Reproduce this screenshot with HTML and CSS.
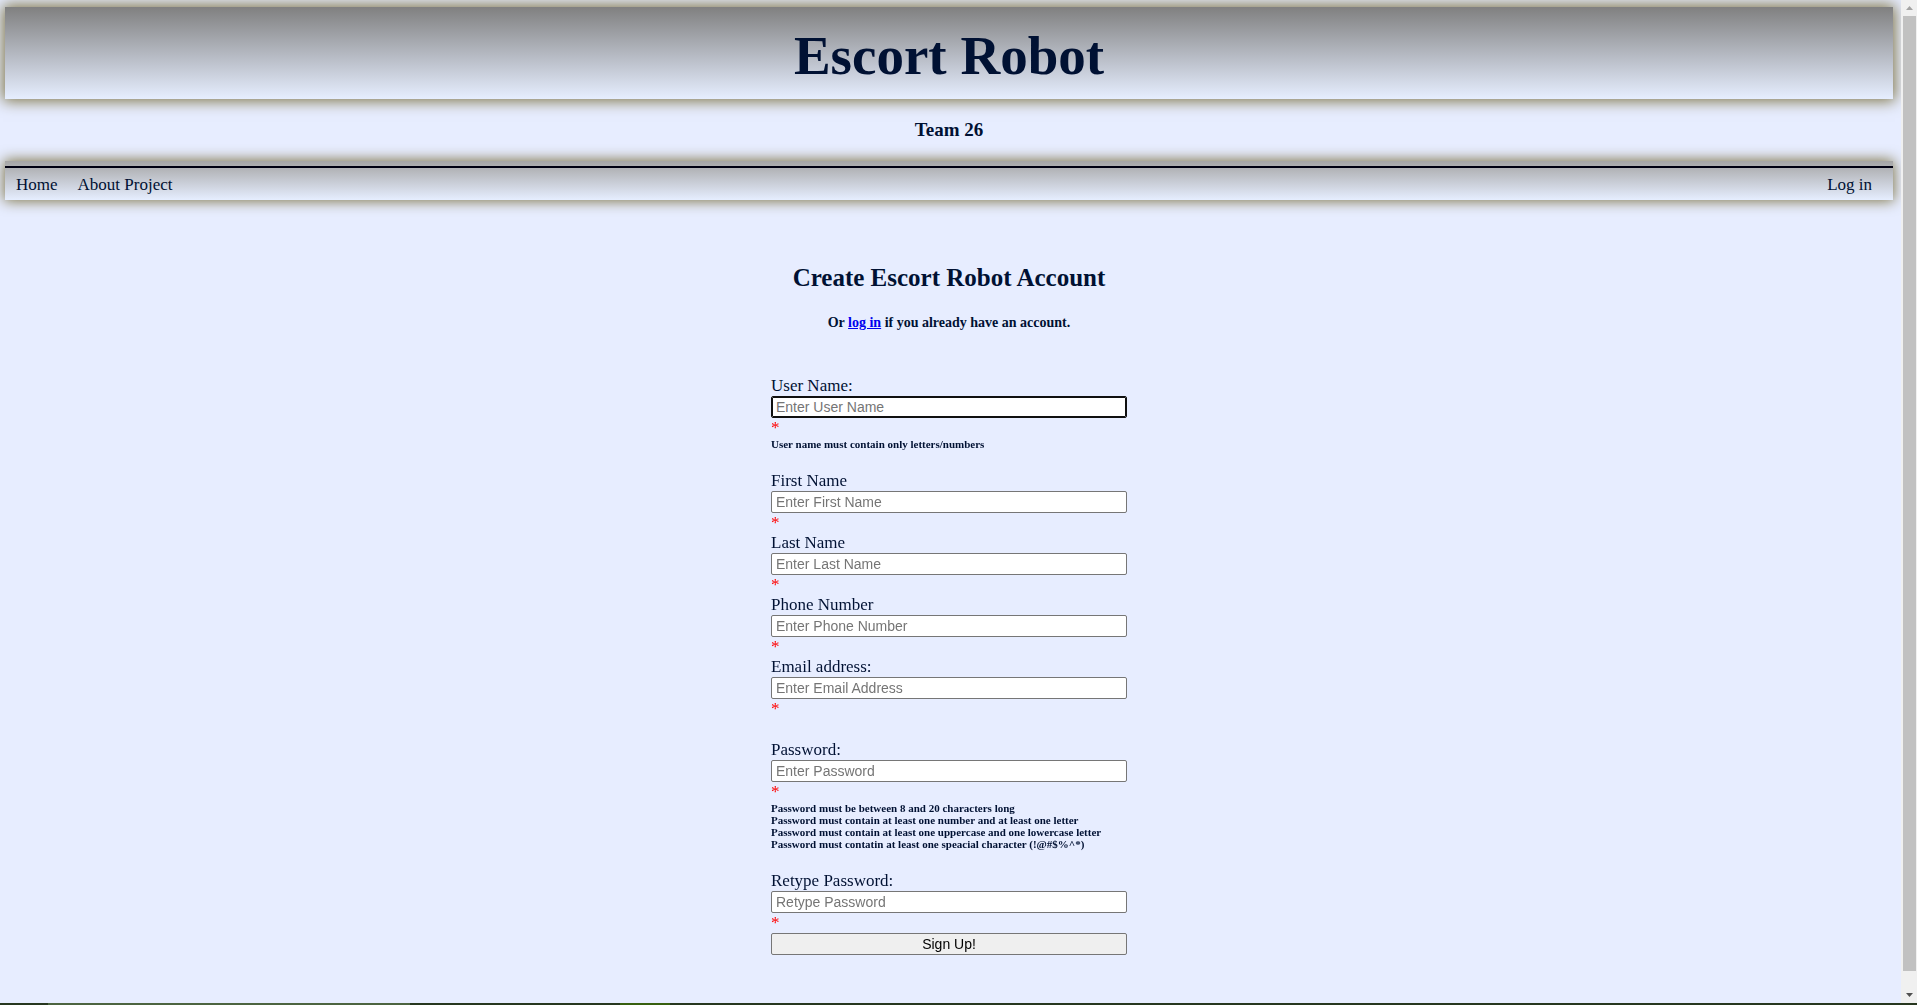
FILE: index.html
```html
<!DOCTYPE html>
<html lang="en">
<head>
<meta charset="utf-8">
<title>Escort Robot</title>
<link rel="stylesheet" href="styles.css">
</head>
<body>
<div class="window">
  <div class="page">
    <header class="banner"><h1 class="banner-title">Escort Robot</h1></header>
    <h3 class="team">Team 26</h3>
    <nav class="nav">
      <div class="nav-links">
        <a href="#">Home</a>
        <a href="#">About Project</a>
        <a class="nav-login" href="#">Log in</a>
      </div>
    </nav>
    <main class="signup">
      <h2 class="signup-title">Create Escort Robot Account</h2>
      <h4 class="signup-hint">Or <a href="#">log in</a> if you already have an account.</h4>
      <form class="form">
        <div class="group">
          <label for="user">User Name:</label>
          <input id="user" type="text" placeholder="Enter User Name" autofocus>
          <span class="required">*</span>
          <p class="note">User name must contain only letters/numbers</p>
        </div>
        <div class="group">
          <label for="first">First Name</label>
          <input id="first" type="text" placeholder="Enter First Name">
          <span class="required">*</span>
          <label for="last">Last Name</label>
          <input id="last" type="text" placeholder="Enter Last Name">
          <span class="required">*</span>
          <label for="phone">Phone Number</label>
          <input id="phone" type="tel" placeholder="Enter Phone Number">
          <span class="required">*</span>
          <label for="email">Email address:</label>
          <input id="email" type="email" placeholder="Enter Email Address">
          <span class="required">*</span>
        </div>
        <div class="group">
          <label for="password">Password:</label>
          <input id="password" type="password" placeholder="Enter Password">
          <span class="required">*</span>
          <p class="note">Password must be between 8 and 20 characters long<br>
          Password must contain at least one number and at least one letter<br>
          Password must contain at least one uppercase and one lowercase letter<br>
          Password must contatin at least one speacial character (!@#$%^*)</p>
        </div>
        <div class="group">
          <label for="retype">Retype Password:</label>
          <input id="retype" type="password" placeholder="Retype Password">
          <span class="required">*</span>
          <button class="submit" type="submit">Sign Up!</button>
        </div>
      </form>
    </main>
  </div>
  <div class="scrollbar" aria-hidden="true">
    <svg class="arrow arrow-up" viewBox="0 0 16 16"><path d="M5 10h7L8.500 6z"/></svg>
    <div class="thumb"></div>
    <svg class="arrow arrow-down" viewBox="0 0 16 16"><path d="M5 6h7L8.500 10z"/></svg>
  </div>
</div>
<div class="taskbar" aria-hidden="true"><div class="task"></div><div class="task-active"></div></div>
</body>
</html>
```

FILE: styles.css
```css
* { box-sizing: border-box; }

body {
  display: flex;
  flex-direction: column;
  height: 100vh;
  margin: 0;
  background: #e7edff;
  color: #001133;
  font: 17px/20px "Liberation Serif", "Times New Roman", serif;
}

h1, h2, h3, h4, p { margin: 0; }

.window {
  display: flex;
  flex: 1;
  min-height: 0;
}

.page {
  flex: 1;
  padding: 7px 8px 0 5px;
  overflow: hidden;
}

.banner {
  padding: 17px 0 11px;
  background: linear-gradient(#808080, #e6eeff);
  box-shadow: 0 0 14px 2px #7e7445;
  text-align: center;
}

.banner-title { font-size: 55px; line-height: 64px; }

.team {
  padding: 21px 0;
  font-size: 19px;
  text-align: center;
}

.nav {
  padding-top: 5px;
  background: linear-gradient(#a5a5a5, #e6eeff);
  box-shadow: 0 0 14px 1px #7e7445;
}

.nav-links {
  display: flex;
  gap: 20px;
  padding: 7px 21px 5px 11px;
  border-top: 2px solid #000011;
}

.nav-links a { color: inherit; text-decoration: none; }
.nav-links .nav-login { margin-left: auto; }

.signup { padding-top: 62px; }

.signup-title {
  font-size: 25px;
  line-height: 32px;
  text-align: center;
}

.signup-hint {
  padding: 19px 0 43px;
  font-size: 14px;
  text-align: center;
}

.signup-hint a { color: #0000ee; }

.form {
  display: flex;
  flex-direction: column;
  gap: 21px;
  width: 356px;
  margin: 0 auto;
}

.group {
  display: flex;
  flex-direction: column;
}

input, .submit {
  height: 22px;
  padding: 1px 4px;
  border: 1px solid #767676;
  border-radius: 2px;
  background: #ffffff;
  color: #000000;
  font: 14px/18px "Liberation Sans", Arial, sans-serif;
}

input::placeholder { color: #757575; }

input:focus {
  border-color: #101010;
  outline: 1px solid #101010;
  outline-offset: -2px;
}

.submit { background: #efefef; }

.required { color: #ff0000; }

.note {
  font-size: 11px;
  font-weight: bold;
  line-height: 12px;
}

.scrollbar {
  display: flex;
  flex-direction: column;
  width: 16px;
  background: #f0f0f0;
}

.arrow { width: 16px; height: 16px; }
.arrow-up { fill: #a3a3a3; }
.arrow-down { fill: #505050; }

.thumb {
  flex: 1;
  margin: 0 1px 16px 2px;
  background: #c1c1c1;
}

.taskbar {
  display: flex;
  height: 2px;
  background: #27371f;
}

.task { width: 362px; margin-left: 48px; background: #4c6440; }
.task-active { width: 50px; margin-left: 210px; background: #38600f; }
```
